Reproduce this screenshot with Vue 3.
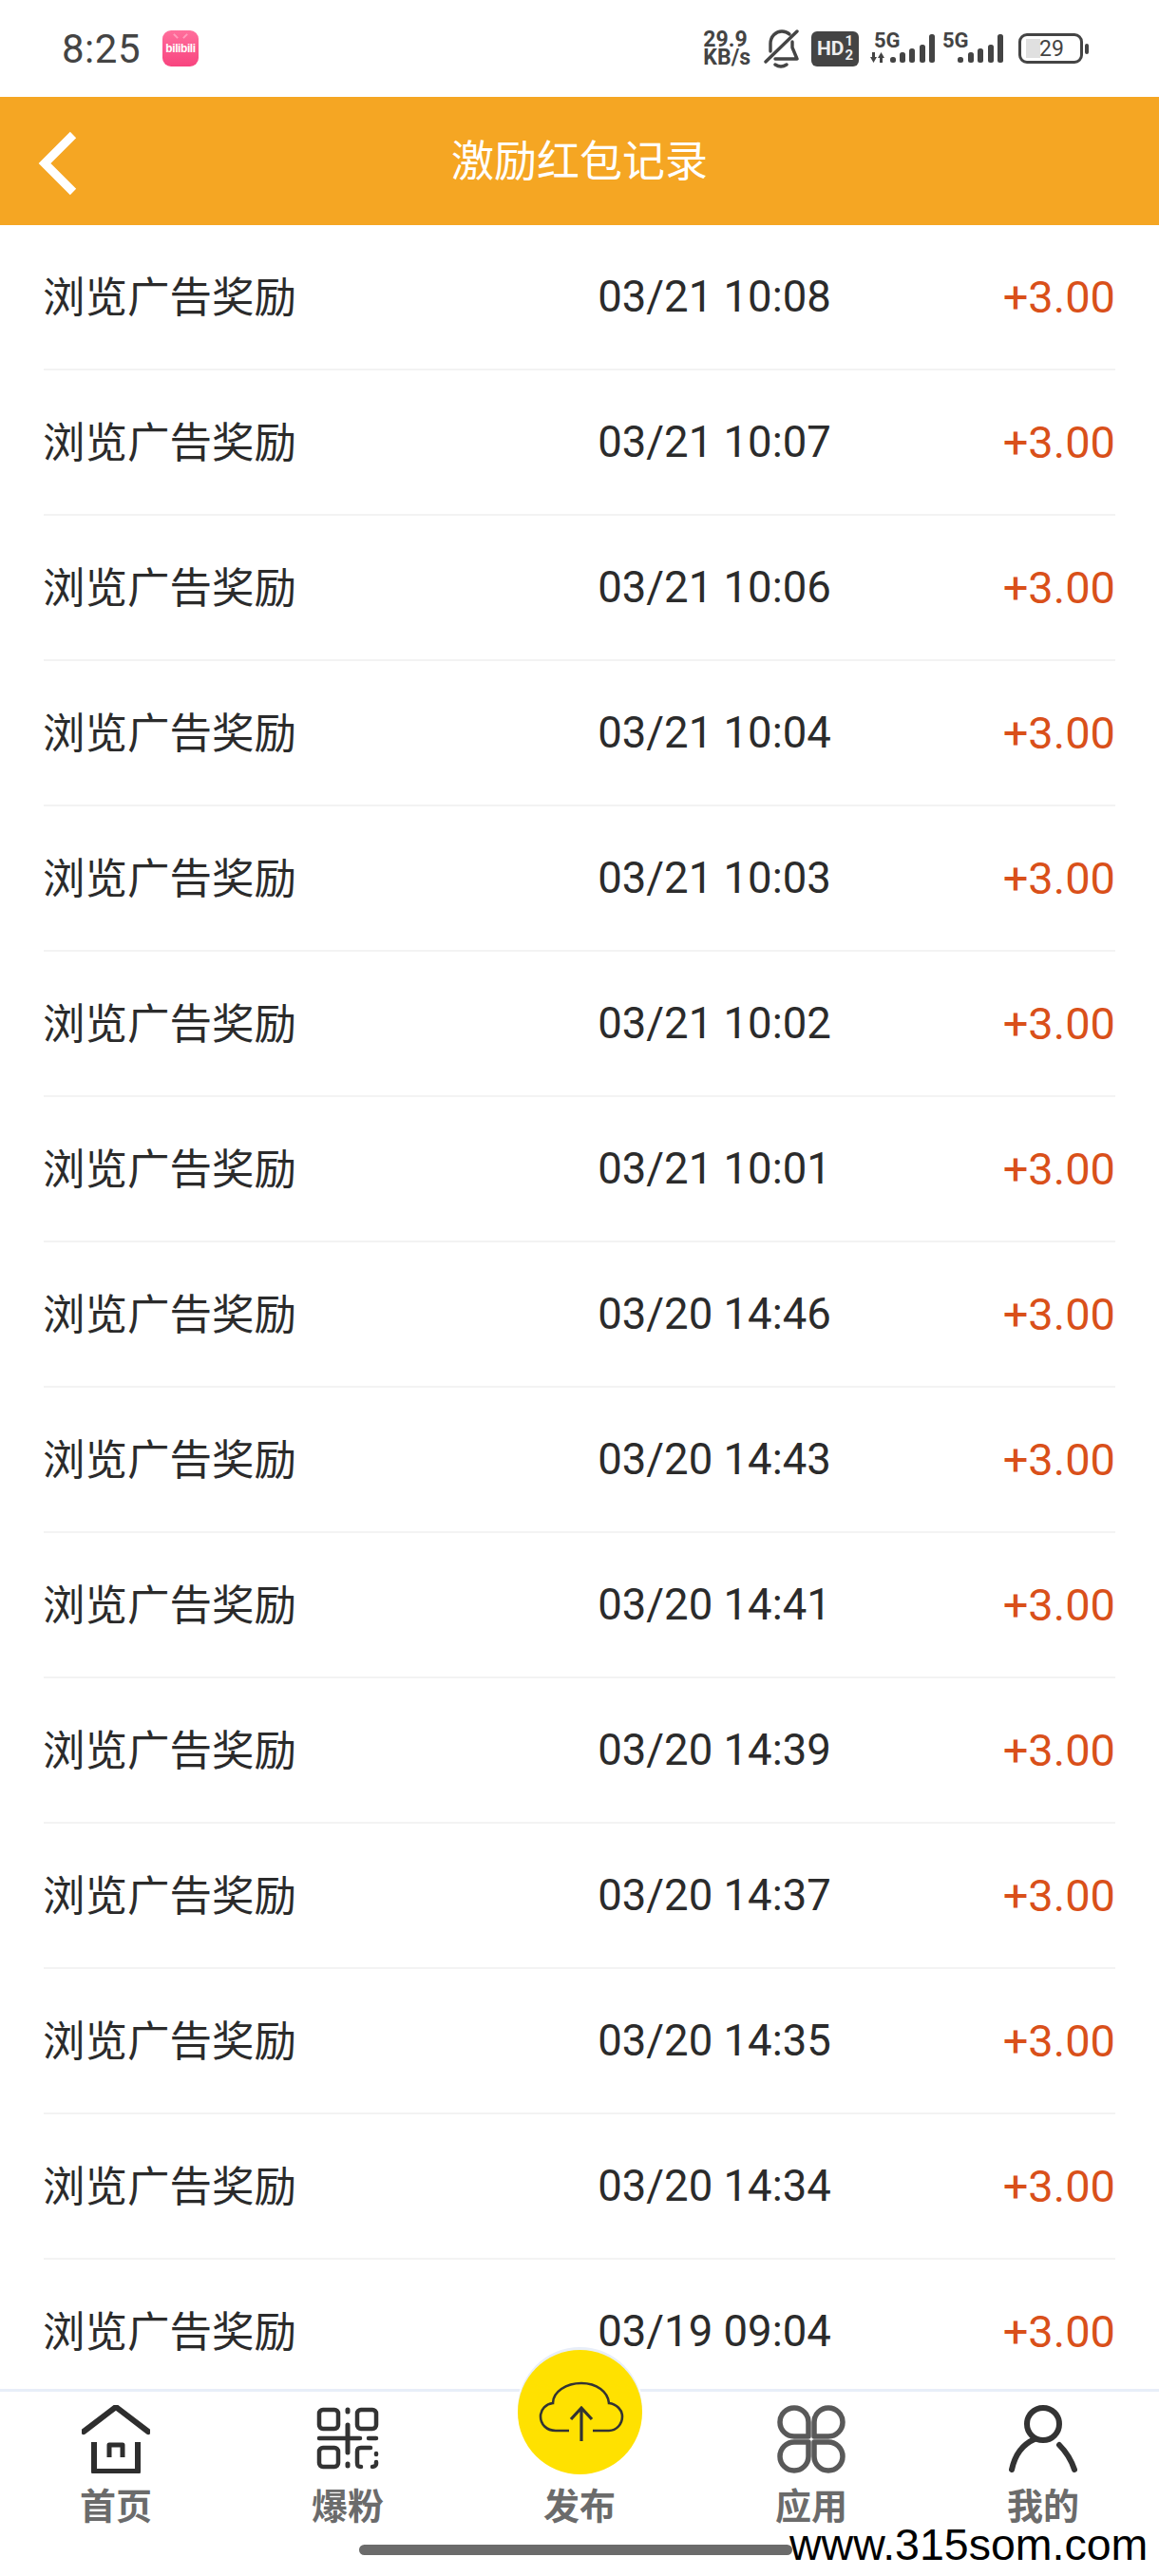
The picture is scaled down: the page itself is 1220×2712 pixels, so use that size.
<script setup>
const records = [
  '03/21 10:08', '03/21 10:07', '03/21 10:06', '03/21 10:04', '03/21 10:03',
  '03/21 10:02', '03/21 10:01', '03/20 14:46', '03/20 14:43', '03/20 14:41',
  '03/20 14:39', '03/20 14:37', '03/20 14:35', '03/20 14:34', '03/19 09:04',
]
</script>

<template>
  <div class="page">
    <div class="status">
      <span class="clock">8:25</span>
      <div class="bili">
        <span class="ear ear-l"></span>
        <span class="ear ear-r"></span>
        <span class="bili-text">bilibili</span>
      </div>
      <div class="status-right">
        <div class="speed">
          <span>29.9</span>
          <span>KB/s</span>
        </div>
        <svg class="bell" width="38" height="42" viewBox="0 0 38 42" fill="none" stroke="#444" stroke-width="3.4" stroke-linecap="round" stroke-linejoin="round">
          <path d="M8 24V16C8 8 14 3 20 3C23 3 26 4 28 6" />
          <path d="M31 14V20L36 32H13" />
          <path d="M3 35L36 3" />
          <path d="M13 38Q19 42 25 38" />
        </svg>
        <div class="hd">
          <span class="hd-main">HD</span>
          <span class="hd-frac"><i>1</i><i>2</i></span>
        </div>
        <svg class="sig-a" width="70" height="42" viewBox="0 0 70 42">
          <text x="4" y="20" class="sig-text">5G</text>
          <path d="M0 30H2V25H5V30H7L3.500 36Z" fill="#444" />
          <path d="M8 31H10V36H13V31H15L11.500 25Z" fill="#444" />
          <rect x="21" y="30" width="6" height="6" rx="2.500" fill="#444" />
          <rect x="31" y="25" width="6" height="11" rx="2.500" fill="#444" />
          <rect x="41" y="21" width="6" height="15" rx="2.500" fill="#444" />
          <rect x="52" y="17" width="6" height="19" rx="2.500" fill="#444" />
          <rect x="62" y="6" width="6" height="30" rx="2.500" fill="#444" />
        </svg>
        <svg class="sig-b" width="64" height="42" viewBox="0 0 64 42">
          <text x="0" y="20" class="sig-text">5G</text>
          <rect x="16" y="30" width="6" height="6" rx="2.500" fill="#444" />
          <rect x="27" y="25" width="6" height="11" rx="2.500" fill="#444" />
          <rect x="37" y="21" width="6" height="15" rx="2.500" fill="#444" />
          <rect x="48" y="17" width="6" height="19" rx="2.500" fill="#444" />
          <rect x="58" y="6" width="6" height="30" rx="2.500" fill="#444" />
        </svg>
        <div class="battery">
          <span class="battery-fill"></span>
          <span class="battery-num">29</span>
        </div>
        <span class="battery-tip"></span>
      </div>
    </div>

    <div class="header">
      <svg class="back" width="44" height="70" viewBox="0 0 44 70" fill="none" stroke="#fff" stroke-width="9">
        <path d="M37 5L7 35L37 65" />
      </svg>
      <h1>激励红包记录</h1>
    </div>

    <div class="list">
      <div class="row" v-for="(t, i) in records" :key="i">
        <span class="name">浏览广告奖励</span>
        <span class="time">{{ t }}</span>
        <span class="amount">+3.00</span>
      </div>
    </div>

    <div class="nav">
      <div class="tab">
        <svg width="72" height="72" viewBox="0 0 72 72" fill="none" stroke="#2e2e2e" stroke-linecap="round" stroke-linejoin="round">
          <path d="M2 28L36 2L70 28" stroke-width="6" />
          <path d="M13 39V70H59V39" stroke-width="6" stroke-linecap="butt" />
          <path d="M29 55V42H43V55" stroke-width="5" stroke-linecap="butt" />
        </svg>
        <span>首页</span>
      </div>
      <div class="tab">
        <svg width="72" height="72" viewBox="0 0 72 72" fill="none" stroke="#333" stroke-width="4.500" stroke-linecap="round">
          <rect x="6" y="5" width="20" height="20" rx="4" />
          <rect x="46" y="5" width="20" height="20" rx="4" />
          <rect x="6" y="45" width="20" height="20" rx="4" />
          <path d="M50 65H50C47 65 46 64 46 61V49C46 46 47 45 50 45H60" />
          <path d="M66 51V52M66 60V62C66 64 64 65 62 65" />
          <path d="M36 5V7M36 21V50M36 62V64" stroke-width="5" />
          <path d="M6 35H49M58 35H66" />
        </svg>
        <span>爆粉</span>
      </div>
      <div class="tab tab-mid">
        <div class="fab">
          <svg width="100" height="75" viewBox="0 0 100 75" fill="none" stroke="#333" stroke-width="2.600">
            <path d="M38 57H24C14 57 8 50 8 42C8 34 14 29 21 28C21 16 35 7 51 7C67 7 79 16 80 28C88 29 94 35 94 42C94 50 88 57 80 57H63" />
            <path d="M51 68V33M40 45L51 33L62 45" stroke-width="3.200" />
          </svg>
        </div>
        <span>发布</span>
      </div>
      <div class="tab">
        <svg width="72" height="72" viewBox="0 0 72 72" fill="none" stroke="#595959" stroke-width="5.500" stroke-linejoin="round">
          <path d="M33 33H18A15 15 0 0 1 18 3A15 15 0 0 1 33 18Z" />
          <path d="M39 33H54A15 15 0 0 0 54 3A15 15 0 0 0 39 18Z" />
          <path d="M33 39H18A15 15 0 0 0 18 69A15 15 0 0 0 33 54Z" />
          <path d="M39 39H54A15 15 0 0 1 54 69A15 15 0 0 1 39 54Z" />
        </svg>
        <span>应用</span>
      </div>
      <div class="tab">
        <svg width="72" height="72" viewBox="0 0 72 72" fill="none" stroke="#333" stroke-width="6" stroke-linecap="round">
          <circle cx="36" cy="20" r="17" />
          <path d="M27 36C13 42 6 54 3 68" />
          <path d="M53 42C61 50 66 59 69 68" />
        </svg>
        <span>我的</span>
      </div>
      <div class="home-bar"></div>
      <div class="watermark">www.315som.com</div>
    </div>
  </div>
</template>

<style>
html, body {
  margin: 0;
  background: #fff;
}
</style>

<style scoped>
.page {
  width: 1220px;
  height: 2712px;
  display: flex;
  flex-direction: column;
  overflow: hidden;
  background: #fff;
  font-family: Roboto, "Noto Sans CJK SC", sans-serif;
}

.status {
  height: 102px;
  flex: none;
  display: flex;
  align-items: center;
  padding: 0 74px 0 65px;
  box-sizing: border-box;
  color: #444;
}
.clock {
  font-size: 42px;
  letter-spacing: 0.5px;
}
.bili {
  position: relative;
  width: 38px;
  height: 38px;
  margin-left: 23px;
  border-radius: 9px;
  background: linear-gradient(#ff6f9c, #f8447f);
  display: flex;
  align-items: center;
  justify-content: center;
}
.bili-text {
  color: #fff;
  font-size: 12px;
  font-weight: 700;
  letter-spacing: -0.4px;
  font-family: "Liberation Sans", sans-serif;
}
.ear {
  position: absolute;
  top: 5px;
  width: 6px;
  height: 2px;
  background: #ff9dbd;
}
.ear-l { left: 11px; transform: rotate(45deg); }
.ear-r { right: 11px; transform: rotate(-45deg); }

.status-right {
  margin-left: auto;
  display: flex;
  align-items: center;
}
.speed {
  display: flex;
  flex-direction: column;
  font-size: 23px;
  line-height: 19px;
  font-weight: 700;
  margin-right: 13px;
}
.bell {
  margin-right: 13px;
}
.hd {
  width: 50px;
  height: 37px;
  background: #444;
  border-radius: 6px;
  color: #eee;
  display: flex;
  align-items: center;
  justify-content: center;
  gap: 1px;
  font-weight: 700;
  margin-right: 12px;
}
.hd-main {
  font-size: 21px;
}
.hd-frac {
  display: flex;
  flex-direction: column;
  font-size: 15px;
  line-height: 15px;
}
.hd-frac i {
  font-style: normal;
}
.sig-a {
  margin-right: 6px;
}
.sig-text {
  font-size: 22px;
  font-weight: 700;
  fill: #444;
}
.sig-b {
  margin-right: 16px;
}
.battery {
  position: relative;
  width: 68px;
  height: 32px;
  box-sizing: border-box;
  border: 3px solid #444;
  border-radius: 9px;
  display: flex;
  align-items: center;
  justify-content: center;
}
.battery-fill {
  position: absolute;
  left: 5px;
  top: 3px;
  width: 15px;
  height: 20px;
  background: #e0e0e0;
}
.battery-num {
  position: relative;
  font-size: 23px;
  margin-left: 2px;
}
.battery-tip {
  width: 4px;
  height: 11px;
  margin-left: 2px;
  border-radius: 2px;
  background: #444;
}

.header {
  height: 135px;
  flex: none;
  position: relative;
  background: #f5a623;
  display: flex;
  align-items: center;
  justify-content: center;
}
.back {
  position: absolute;
  left: 40px;
  top: 35px;
}
h1 {
  margin: 0 0 6px;
  color: #fff;
  font-size: 45px;
  font-weight: 400;
}

.list {
  flex: 1;
  min-height: 0;
  overflow: hidden;
  padding: 0 46px;
}
.row {
  height: 153px;
  box-sizing: border-box;
  border-bottom: 2px solid #f3f3f3;
  display: grid;
  grid-template-columns: 484px 1fr 200px;
  align-items: center;
  color: #2b2b2b;
}
.name {
  font-size: 44.500px;
  margin-bottom: 6px;
  margin-left: -1px;
  font-weight: 400;
}
.time {
  text-align: center;
  font-size: 45.500px;
  font-weight: 400;
}
.amount {
  text-align: right;
  color: #d9501a;
  font-size: 47px;
  font-weight: 400;
}

.nav {
  height: 197px;
  flex: none;
  position: relative;
  box-sizing: border-box;
  border-top: 3px solid #e8eef8;
  background: #fff;
  display: flex;
}
.tab {
  width: 244px;
  display: flex;
  flex-direction: column;
  align-items: center;
  padding-top: 14px;
}
.tab span {
  margin-top: 16px;
  color: #6b6b6b;
  font-size: 38px;
  line-height: 38px;
  font-weight: 700;
}
.tab-mid span {
  margin-top: 88px;
}
.fab {
  position: absolute;
  left: 545px;
  top: -44px;
  width: 131px;
  height: 131px;
  border-radius: 50%;
  background: #ffe100;
  box-shadow: 0 -3px 0 #e8eef8, 0 0 0 2px #fff;
  display: flex;
  align-items: center;
  justify-content: center;
}
.home-bar {
  position: absolute;
  left: 378px;
  top: 161px;
  width: 456px;
  height: 11px;
  border-radius: 6px;
  background: #6b6b6b;
}
.watermark {
  position: absolute;
  left: 831px;
  top: 142px;
  color: #000;
  font-size: 46.500px;
  line-height: 38px;
  font-family: "Liberation Sans", sans-serif;
}
</style>
